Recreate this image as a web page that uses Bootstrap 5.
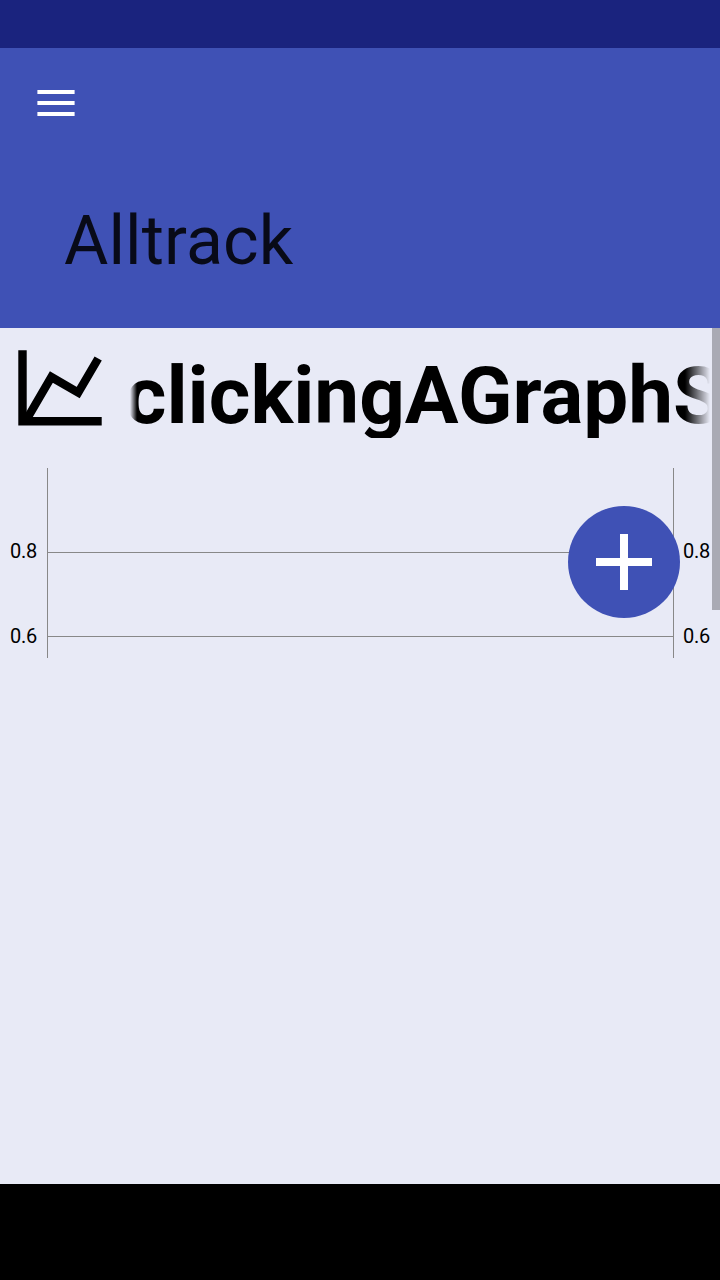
<!DOCTYPE html>
<html lang="en">
<head>
<meta charset="utf-8">
<meta name="viewport" content="width=device-width, initial-scale=1">
<title>Alltrack</title>
<link href="https://cdn.jsdelivr.net/npm/bootstrap@5.3.0/dist/css/bootstrap.min.css" rel="stylesheet">
<style>
  body { font-family: Roboto, sans-serif; background: #e8eaf6; color: #000; height: 1280px; }
  .status-strip { height: 48px; background: #1a237e; }
  .app-header { height: 280px; background: #3f51b5; padding: 36px 32px 0; }
  .menu-btn { width: 48px; height: 38px; }
  .app-title { font-size: 68px; line-height: 80px; font-weight: 400; letter-spacing: .1px; color: rgba(0,0,0,.87); margin: 79px 0 0 32px; }
  .nav-strip { height: 96px; background: #000; }
  .graph-title { height: 110px; padding-left: 10px; }
  .graph-icon { width: 100px; height: 100px; margin-top: 10px; }
  .marquee-text { width: 580px; margin-left: 20px; font-size: 80px; line-height: 94px; font-weight: 700; padding-top: 21px; text-indent: -5.3px;
    -webkit-mask-image: linear-gradient(to right, transparent, #000 7px, #000 555px, transparent 580px);
    mask-image: linear-gradient(to right, transparent, #000 7px, #000 555px, transparent 580px); }
  .chart { height: 190px; margin-top: 30px; font-size: 20px; line-height: 24px; letter-spacing: -.3px; }
  .axis-labels { width: 47px; padding: 71px 0 0 10px; }
  .axis-labels.end { width: 46px; padding-left: 9px; }
  .axis-labels span { height: 85px; flex-shrink: 0; }
  .plot { border: solid #888; border-width: 0 1px; }
  .grid-line { height: 1px; background: #888; }
  .scroll-thumb { width: 8px; height: 282px; background: #a9aab4; }
  .fab { right: 40px; top: 178px; width: 112px; height: 112px; background: #3f51b5; }
</style>
</head>
<body class="d-flex flex-column overflow-hidden">
  <div class="status-strip flex-shrink-0"></div>
  <header class="app-header flex-shrink-0">
    <button class="menu-btn btn p-0 border-0 d-block" aria-label="Menu">
      <svg class="d-block" width="48" height="38" viewBox="0 0 48 38"><path fill="#fff" d="M5.4 6h37.2v4H5.4zM5.4 17h37.2v4H5.4zM5.4 28h37.2v4H5.4z"/></svg>
    </button>
    <h1 class="app-title">Alltrack</h1>
  </header>
  <main class="position-relative flex-grow-1">
    <section class="graph-title d-flex overflow-hidden">
      <svg class="graph-icon flex-shrink-0" viewBox="10 338 100 100">
        <path d="M18.3 350.3h8.4v66.8h75v8.5H18.3z"/>
        <path fill="none" stroke="#000" stroke-width="8.4" d="M26 420.5 51.4 377 78.2 392.6 98.2 358.5"/>
      </svg>
      <div class="marquee-text flex-shrink-0 text-nowrap overflow-hidden">clickingAGraphS</div>
    </section>
    <section class="chart d-flex">
      <div class="axis-labels d-flex flex-column"><span>0.8</span><span>0.6</span></div>
      <div class="plot flex-grow-1">
        <div class="grid-line" style="margin-top:84px"></div>
        <div class="grid-line" style="margin-top:83px"></div>
      </div>
      <div class="axis-labels end d-flex flex-column"><span>0.8</span><span>0.6</span></div>
    </section>
    <div class="scroll-thumb position-absolute top-0 end-0"></div>
    <button class="fab btn p-0 border-0 rounded-circle position-absolute" aria-label="Add">
      <svg class="d-block" width="112" height="112" viewBox="0 0 112 112"><path fill="#fff" d="M52 28h8v24h24v8H60v24h-8V60H28v-8h24z"/></svg>
    </button>
  </main>
  <footer class="nav-strip flex-shrink-0"></footer>
<script src="https://cdn.jsdelivr.net/npm/bootstrap@5.3.0/dist/js/bootstrap.bundle.min.js"></script>
</body>
</html>
